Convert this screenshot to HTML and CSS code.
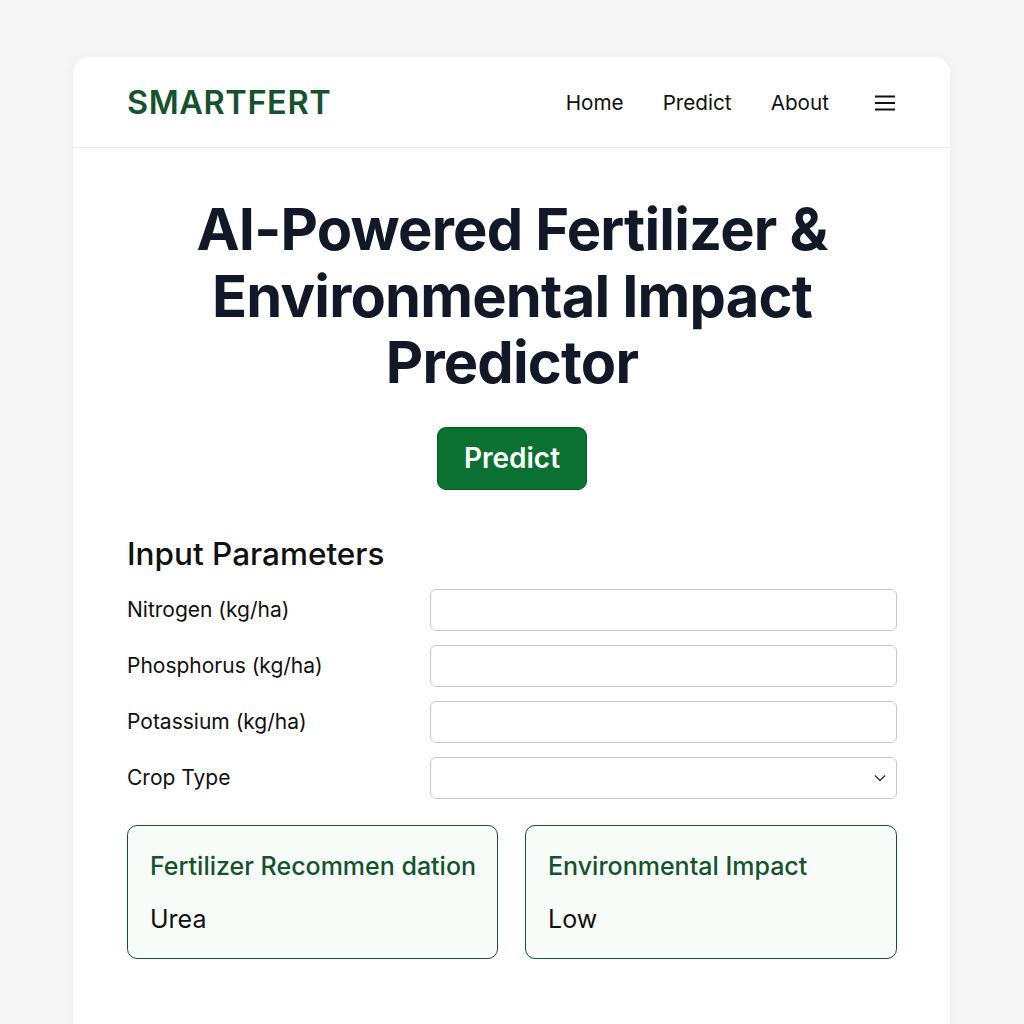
FILE: index.html
```html
<!DOCTYPE html>
<html lang="en">
<head>
<meta charset="utf-8">
<title>SmartFert</title>
<link rel="stylesheet" href="styles.css">
</head>
<body>
<div class="card">
  <header class="topbar">
    <div class="logo">SMARTFERT</div>
    <nav class="nav">
      <a href="#">Home</a>
      <a href="#">Predict</a>
      <a href="#">About</a>
      <svg class="menu" width="20" height="16" viewBox="0 0 20 16"><path d="M0 1.5h20M0 8h20M0 14.5h20" stroke="#111" stroke-width="2.2"/></svg>
    </nav>
  </header>
  <main class="content">
    <h1 class="title">AI-Powered Fertilizer &amp;<br>Environmental Impact<br>Predictor</h1>
    <div class="btn-wrap"><button class="btn">Predict</button></div>
    <h2 class="section">Input Parameters</h2>
    <div class="form">
      <label>Nitrogen (kg/ha)</label><input type="text">
      <label>Phosphorus (kg/ha)</label><input type="text">
      <label>Potassium (kg/ha)</label><input type="text">
      <label>Crop Type</label>
      <div class="select"><svg width="12" height="8" viewBox="0 0 12 8"><path d="M1 1.5l5 5 5-5" fill="none" stroke="#333" stroke-width="1.4"/></svg></div>
    </div>
    <div class="results">
      <div class="result">
        <div class="r-title">Fertilizer Recommen dation</div>
        <div class="r-value">Urea</div>
      </div>
      <div class="result">
        <div class="r-title">Environmental Impact</div>
        <div class="r-value">Low</div>
      </div>
    </div>
  </main>
</div>
</body>
</html>
```
FILE: styles.css
```css
* { box-sizing: border-box; }
html, body { margin: 0; padding: 0; }
body {
  background: #f6f6f6;
  font-family: Inter, "Noto Sans", sans-serif;
  color: #111;
  height: 1024px;
  overflow: hidden;
}
.card {
  width: 877px;
  margin: 57px auto 0 73px;
  background: #fff;
  border-radius: 16px;
  box-shadow: 0 2px 14px rgba(0,0,0,0.05);
  min-height: 1100px;
}
.topbar {
  height: 91px;
  display: flex;
  align-items: center;
  justify-content: space-between;
  padding: 0 55px 0 54px;
  border-bottom: 1px solid #ececec;
}
.logo {
  font-size: 32.5px;
  font-weight: 600;
  color: #14532d;
  letter-spacing: 0.6px;
  padding-top: 1px;
}
.nav {
  display: flex;
  align-items: center;
  gap: 39px;
  padding-top: 1px;
}
.nav a {
  color: #111;
  text-decoration: none;
  font-size: 20.7px;
}
.menu { margin-left: 7px; }
.content { padding: 0 53px 0 54px; }
.title {
  margin: 48px 0 0;
  text-align: center;
  font-size: 57.8px;
  line-height: 66.5px;
  font-weight: 700;
  color: #111827;
  letter-spacing: -0.8px;
}
.btn-wrap { display: flex; justify-content: center; margin-top: 31px; }
.btn {
  width: 150px;
  height: 63px;
  background: #0b7132;
  border: 1px solid #065a26;
  border-radius: 9px;
  color: #fff;
  font-family: Inter, sans-serif;
  font-size: 28px;
  font-weight: 600;
}
.section {
  margin: 46px 0 0;
  font-size: 31.5px;
  font-weight: 500;
  line-height: 36px;
  color: #111;
}
.form {
  margin-top: 17px;
  display: grid;
  grid-template-columns: 303px 1fr;
  row-gap: 14px;
  align-items: center;
}
.form label { font-size: 21px; color: #111; }
.form input, .form .select {
  height: 42px;
  border: 1px solid #c9c9c9;
  border-radius: 6px;
  background: #fff;
  width: 100%;
}
.form .select {
  display: flex;
  align-items: center;
  justify-content: flex-end;
  padding-right: 10px;
}
.results {
  margin-top: 26px;
  display: grid;
  grid-template-columns: minmax(0, 371px) minmax(0, 1fr);
  gap: 27px;
}
.result {
  height: 134px;
  border: 1.5px solid #14532d;
  border-radius: 10px;
  background: #f8fcf9;
  padding: 25px 22px 0;
}
.r-title { font-size: 25px; font-weight: 500; color: #14532d; line-height: 30px; white-space: nowrap; }
.r-value { margin-top: 23px; font-size: 25px; line-height: 30px; color: #111; }
```
